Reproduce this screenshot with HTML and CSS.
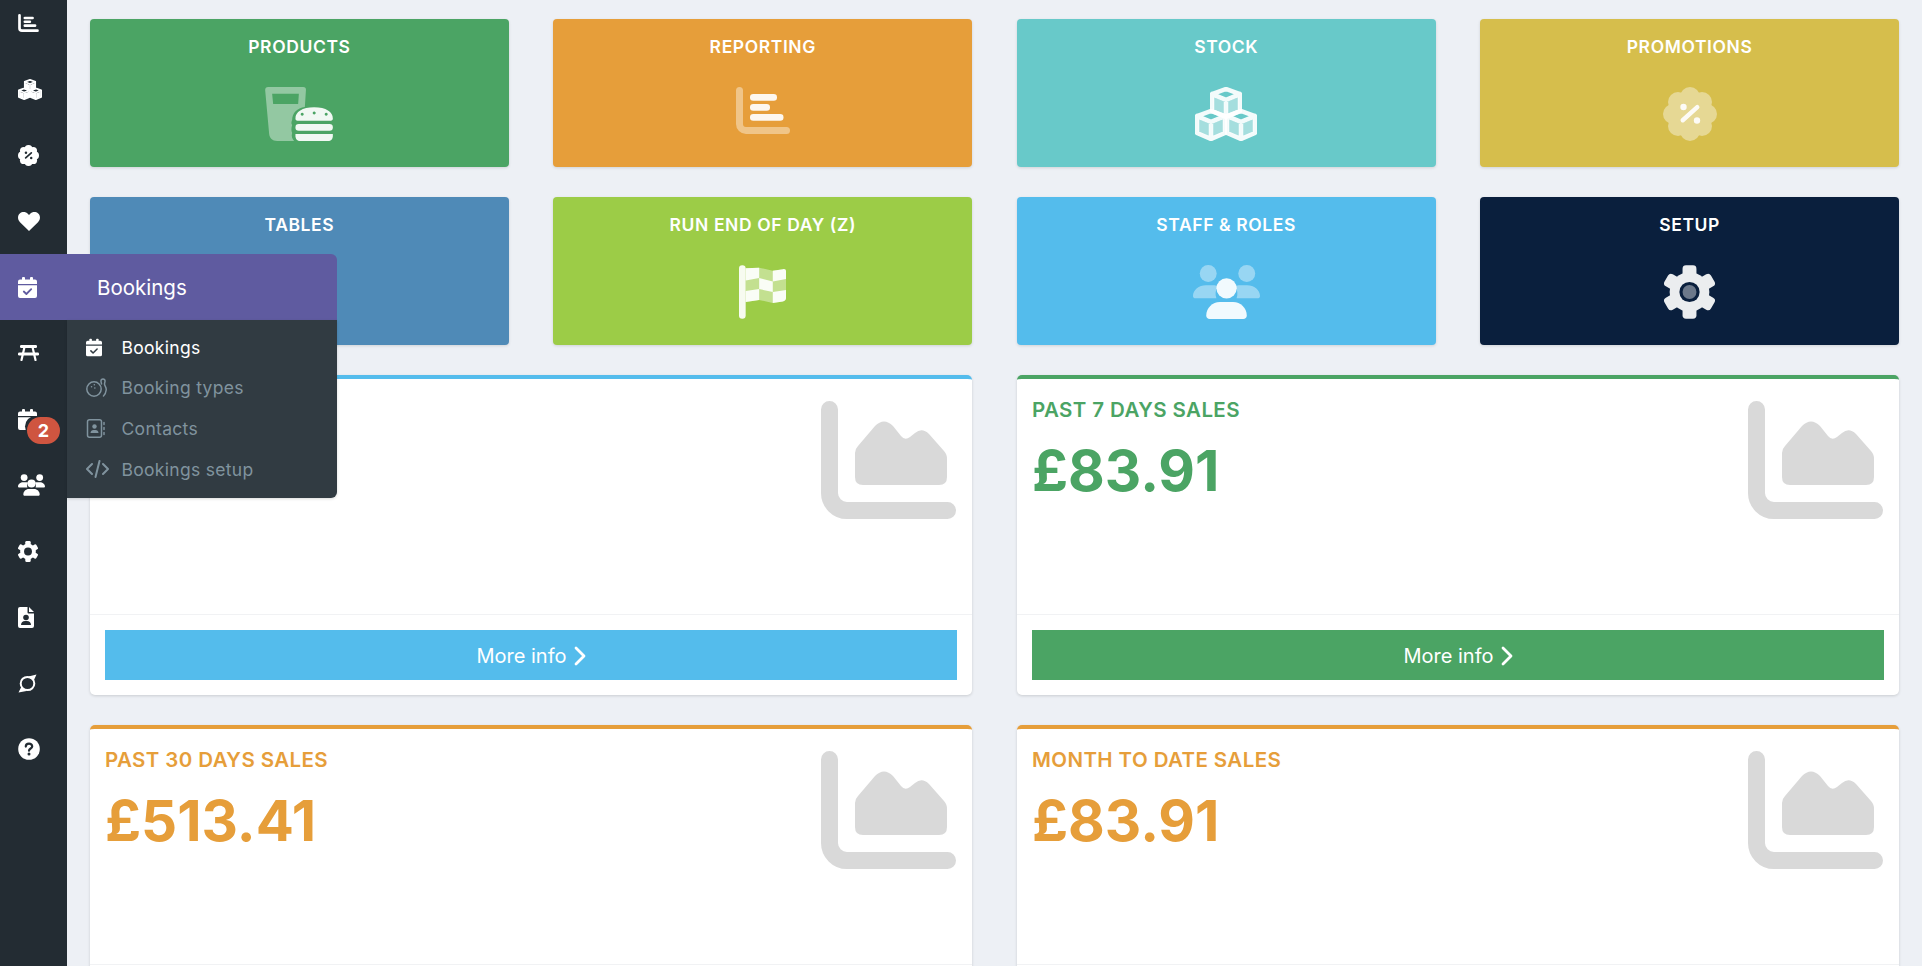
FILE: index.html
```html
<!DOCTYPE html>
<html lang="en">
<head>
    <meta charset="UTF-8">
    <meta name="viewport" content="width=device-width, initial-scale=1.0">
    <title>Dashboard</title>
    <link rel="stylesheet" href="styles.css">
</head>
<body>
    <svg class="sprite" aria-hidden="true">
        <symbol id="i-chart" viewBox="0 0 54 47">
            <path class="sec line" stroke-width="7" d="M3.5 3.5V37a6.5 6.5 0 0 0 6.5 6.5H50.5"/>
            <rect class="pri" x="14" y="7" width="27" height="6.7" rx="3.3"/>
            <rect class="pri" x="14" y="17" width="20" height="6.7" rx="3.3"/>
            <rect class="pri" x="14" y="27" width="33.5" height="6.7" rx="3.3"/>
        </symbol>
        <symbol id="cube" viewBox="0 0 32 32">
            <path class="sec" d="M3 10l11.5 4.6V28L3 23.5zM29 10l-11.5 4.6V28L29 23.5z"/>
            <path class="pri line" stroke-width="4.500" d="M16 2l14 5.2V24l-14 6-14-6V7.2zM2 7.2l14 5.6 14-5.6M16 12.8V30"/>
        </symbol>
        <symbol id="i-cubes" viewBox="0 0 62 54">
            <use href="#cube" x="15" y="0" width="32" height="32"/>
            <use href="#cube" x="0" y="22" width="32" height="32"/>
            <use href="#cube" x="30" y="22" width="32" height="32"/>
        </symbol>
        <symbol id="i-percent" viewBox="0 0 54 54">
            <g class="sec">
                <circle cx="27" cy="27" r="19"/>
                <circle cx="27" cy="10" r="10"/><circle cx="39" cy="15" r="10"/><circle cx="44" cy="27" r="10"/><circle cx="39" cy="39" r="10"/>
                <circle cx="27" cy="44" r="10"/><circle cx="15" cy="39" r="10"/><circle cx="10" cy="27" r="10"/><circle cx="15" cy="15" r="10"/>
            </g>
            <g class="pct">
                <circle cx="20.5" cy="20" r="3.2"/><circle cx="34" cy="33.5" r="3.2"/>
                <rect x="15" y="24.5" width="24" height="4.4" rx="2.2" transform="rotate(-42 27 26.7)"/>
            </g>
        </symbol>
        <symbol id="i-heart" viewBox="0 0 22 19">
            <path class="pri" d="M11 19L2 10.2C-.6 7.600-.6 3.600 1.800 1.500 4.200-.6 7.800-.3 10 1.900l1 1 1-1c2.200-2.200 5.800-2.500 8.200-.4 2.400 2.100 2.400 6.100-.2 8.700z"/>
        </symbol>
        <symbol id="i-calendar" viewBox="0 0 19 21">
            <rect class="pri" x="4" y="0" width="3" height="5" rx="1"/>
            <rect class="pri" x="12" y="0" width="3" height="5" rx="1"/>
            <path class="pri" d="M2 2.500H17a2 2 0 0 1 2 2V7H0V4.500a2 2 0 0 1 2-2zM0 8.300H19V19a2 2 0 0 1-2 2H2a2 2 0 0 1-2-2z"/>
            <path class="cut-line" stroke-width="1.800" d="M5.800 14.500l2.600 2.500 4.800-4.800"/>
        </symbol>
        <symbol id="i-table" viewBox="0 0 21 16">
            <rect class="pri" x="2" y="0" width="17" height="3" rx="1.200"/>
            <rect class="pri" x="0" y="7.500" width="21" height="3" rx="1.200"/>
            <path class="pri line" stroke-width="2.200" d="M6.500 2L3.500 15M14.500 2l3 13"/>
        </symbol>
        <symbol id="i-calclock" viewBox="0 0 19 21">
            <rect class="pri" x="4" y="0" width="3" height="5" rx="1"/>
            <rect class="pri" x="12" y="0" width="3" height="5" rx="1"/>
            <path class="pri" d="M2 2.500H17a2 2 0 0 1 2 2V7H0V4.500a2 2 0 0 1 2-2zM0 8.300H19V19a2 2 0 0 1-2 2H2a2 2 0 0 1-2-2z"/>
        </symbol>
        <symbol id="i-users" viewBox="0 0 67.300 54">
            <g class="sec">
                <circle cx="15.300" cy="8.500" r="8.500"/>
                <circle cx="54" cy="8.500" r="8.500"/>
                <path d="M0 31C0 25 6 20.300 13 20.300H20C22 20.300 23.500 20.700 25 21.500 22.500 25 22 29.500 23.500 33.300H2.500C1 33.300 0 32.500 0 31z"/>
                <path d="M67.300 31C67.300 25 61.300 20.300 54.300 20.300H47.300C45.300 20.300 43.800 20.700 42.300 21.500 44.800 25 45.300 29.500 43.800 33.300H64.800C66.300 33.300 67.300 32.500 67.300 31z"/>
            </g>
            <circle class="pri" cx="33.700" cy="23.300" r="10.200"/>
            <path class="pri" d="M13.300 50.500C13.300 43 19.500 37 27 37H40.300C47.800 37 54 43 54 50.500 54 52.500 52.500 54 50.500 54H16.800C14.800 54 13.300 52.500 13.300 50.500z"/>
        </symbol>
        <symbol id="i-gear" viewBox="0 0 51.400 54">
            <g class="pri" transform="translate(25.700 27)">
                <circle r="20"/>
                <rect x="-7" y="-27" width="14" height="14" rx="3.500"/>
                <rect x="-7" y="-27" width="14" height="14" rx="3.500" transform="rotate(60)"/>
                <rect x="-7" y="-27" width="14" height="14" rx="3.500" transform="rotate(120)"/>
                <rect x="-7" y="-27" width="14" height="14" rx="3.500" transform="rotate(180)"/>
                <rect x="-7" y="-27" width="14" height="14" rx="3.500" transform="rotate(240)"/>
                <rect x="-7" y="-27" width="14" height="14" rx="3.500" transform="rotate(300)"/>
            </g>
            <circle class="cut" cx="25.700" cy="27" r="10.200"/>
            <circle class="hub" cx="25.700" cy="27" r="7"/>
        </symbol>
        <symbol id="i-fileuser" viewBox="0 0 16 21">
            <path class="pri" d="M2 0H9.500V5.500a1 1 0 0 0 1 1H16V19a2 2 0 0 1-2 2H2a2 2 0 0 1-2-2V2a2 2 0 0 1 2-2zM11 0l5 5H11z"/>
            <circle class="cut" cx="8" cy="10.500" r="2.800"/>
            <path class="cut" d="M3 18c0-2.500 1.800-4 4-4h2c2.200 0 4 1.500 4 4z"/>
        </symbol>
        <symbol id="i-orbit" viewBox="0 0 19 19">
            <ellipse class="line pri" stroke-width="2" cx="9.500" cy="9.500" rx="6.800" ry="6.600"/>
            <path class="pri" d="M18.500 .5L10.500 2.500 15.500 7zM.5 18.500L8.500 17 3.500 12.500z"/>
        </symbol>
        <symbol id="i-help" viewBox="0 0 22 22">
            <circle class="pri" cx="11" cy="11" r="10.800"/>
            <path class="cut-line" stroke-width="2.200" d="M7.800 8.600C7.800 6.800 9.200 5.700 11 5.700S14.200 6.800 14.200 8.500C14.200 10.600 11 10.500 11 12.700"/>
            <circle class="cut" cx="11" cy="16" r="1.500"/>
        </symbol>
        <symbol id="i-burger" viewBox="0 0 67.700 54">
            <path class="sec" fill-rule="evenodd" d="M3 0H38C40 0 41 1 40.800 3L39.700 20C32 21 27 26 27 33 26 35 26 37 27 38 26 41 26 44 27 46 26 49 27 52 29 54H12C7 54 4.500 51 4 47L0 3C0 1 1 0 3 0zM7 6.700L8 17H33L33.700 6.700z"/>
            <path class="pri" fill-rule="evenodd" d="M30.300 31.500C30.300 25 37 20.300 49 20.300S67.700 25 67.700 31.500C67.700 32.800 67 33.700 65.700 33.700H32.300C31 33.700 30.300 32.800 30.300 31.500zM37 25.700a1.500 1.500 0 1 0 .1 0zM49 24.500a1.500 1.500 0 1 0 .1 0zM61 25.700a1.500 1.500 0 1 0 .1 0z"/>
            <rect class="pri" x="30.300" y="37" width="37.400" height="6.700" rx="3.300"/>
            <path class="pri" d="M30.300 47H67.700V49C67.700 52 65.700 54 63 54H35C32.300 54 30.300 52 30.300 49z"/>
        </symbol>
        <symbol id="i-flag" viewBox="0 0 47.300 54">
            <rect class="pri" x="0" y="0" width="6.700" height="54" rx="3.300"/>
            <path class="sec" d="M6.700 3L20 2.500 34 5.500 44.500 4C46 3.800 47.300 4.500 47.300 6V33C47.300 35 46 36 44 36.500L34 38 20 35 6.700 37z"/>
            <path class="pri" d="M6.700 3L20.300 2.500V13L6.700 15.500zM20.300 13L34 16.500V27L20.300 24zM6.700 26L20.300 24V35L6.700 37zM34 5.500L44.500 4C46 3.800 47.300 4.500 47.300 6V14L34 16.500zM34 27L47.300 25V33C47.300 35 46 36 44 36.500L34 38z"/>
        </symbol>
        <symbol id="i-area" viewBox="0 0 135 118">
            <path class="area-axis" d="M8.500 8.500V92a17.500 17.500 0 0 0 17.500 17.500H126.500"/>
            <path class="area-fill" d="M34 52Q34 48 37 45L54 25Q63 16 72 25L80 35Q84 40 89 36L94 32Q101 26 108 33L123 50Q126 53 126 58V76Q126 84 118 84H42Q34 84 34 76Z"/>
        </symbol>
    </svg>

    <nav class="sidebar">
        <div class="side-item"><svg width="21" height="18"><use href="#i-chart"/></svg></div>
        <div class="side-item"><svg width="24" height="21"><use href="#i-cubes"/></svg></div>
        <div class="side-item"><svg class="side-percent" width="21" height="21"><use href="#i-percent"/></svg></div>
        <div class="side-item"><svg width="22" height="19"><use href="#i-heart"/></svg></div>
        <div class="side-item side-active">
            <div class="flyout">
                <div class="fly-head">
                    <svg width="19" height="21"><use href="#i-calendar"/></svg>
                    <span>Bookings</span>
                </div>
                <ul class="fly-menu">
                    <li class="current">
                        <span class="fly-icon"><svg width="16" height="19"><use href="#i-calendar"/></svg></span>
                        Bookings
                    </li>
                    <li>
                        <span class="fly-icon">
                            <svg class="outline" width="21" height="19" viewBox="0 0 21 19">
                                <circle cx="8" cy="11" r="7.200"/>
                                <path d="M17 1c1.500 0 2.200 1.200 2 2.500-.2 1.500-.8 2-.3 3.500.5 1.500 1.800 2.500 1.500 5-.3 2.500-1 4.500-2.700 6M17 1c-1.500 0-2.200 1.200-2 2.500.1 1 .5 1.600.5 2.500"/>
                                <path d="M5.500 8.800h.1M8.300 6.800h.1M8.800 10h.1"/>
                            </svg>
                        </span>
                        Booking types
                    </li>
                    <li>
                        <span class="fly-icon">
                            <svg class="outline" width="19" height="19" viewBox="0 0 19 19">
                                <rect x="1.500" y=".8" width="14" height="17.400" rx="2"/>
                                <circle class="solid" cx="8.500" cy="7.500" r="2.200"/>
                                <path class="solid" d="M4.500 14c0-2 1.500-3 3-3h2c1.500 0 3 1 3 3z"/>
                                <path d="M18 3.500v2M18 8.500v2M18 13.500v2"/>
                            </svg>
                        </span>
                        Contacts
                    </li>
                    <li>
                        <span class="fly-icon">
                            <svg class="outline" width="23" height="18" viewBox="0 0 23 18">
                                <path stroke-width="2" d="M6 4L1 9l5 5M17 4l5 5-5 5M13.500 1L9.500 17"/>
                            </svg>
                        </span>
                        Bookings setup
                    </li>
                </ul>
            </div>
        </div>
        <div class="side-item"><svg width="21" height="16"><use href="#i-table"/></svg></div>
        <div class="side-item">
            <svg width="19" height="21"><use href="#i-calclock"/></svg>
            <span class="side-badge">2</span>
        </div>
        <div class="side-item"><svg width="27" height="22"><use href="#i-users"/></svg></div>
        <div class="side-item"><svg class="side-gear" width="20" height="21"><use href="#i-gear"/></svg></div>
        <div class="side-item"><svg width="16" height="21"><use href="#i-fileuser"/></svg></div>
        <div class="side-item"><svg width="19" height="19"><use href="#i-orbit"/></svg></div>
        <div class="side-item"><svg width="22" height="22"><use href="#i-help"/></svg></div>
    </nav>

    <main class="content">
        <section class="tiles">
            <a class="tile tile-green"><h3>PRODUCTS</h3><svg width="68" height="54"><use href="#i-burger"/></svg></a>
            <a class="tile tile-orange"><h3>REPORTING</h3><svg width="54" height="47" class="tile-chart"><use href="#i-chart"/></svg></a>
            <a class="tile tile-teal"><h3>STOCK</h3><svg width="62" height="54"><use href="#i-cubes"/></svg></a>
            <a class="tile tile-yellow"><h3>PROMOTIONS</h3><svg width="54" height="54"><use href="#i-percent"/></svg></a>
            <a class="tile tile-steel"><h3>TABLES</h3><svg width="62" height="47"><use href="#i-table"/></svg></a>
            <a class="tile tile-lime"><h3>RUN END OF DAY (Z)</h3><svg width="47" height="54"><use href="#i-flag"/></svg></a>
            <a class="tile tile-sky"><h3>STAFF &amp; ROLES</h3><svg width="67" height="54"><use href="#i-users"/></svg></a>
            <a class="tile tile-navy"><h3>SETUP</h3><svg width="51" height="54"><use href="#i-gear"/></svg></a>
        </section>

        <section class="cards">
            <div class="card card-sky">
                <div class="card-body">
                    <svg class="card-chart" width="135" height="118"><use href="#i-area"/></svg>
                </div>
                <div class="card-foot"><a class="more-btn">More info <svg class="chev" width="12" height="20" viewBox="0 0 12 20"><path d="M2 2l8 8-8 8"/></svg></a></div>
            </div>
            <div class="card card-green">
                <div class="card-body">
                    <h4>PAST 7 DAYS SALES</h4>
                    <div class="amount">£83.91</div>
                    <svg class="card-chart" width="135" height="118"><use href="#i-area"/></svg>
                </div>
                <div class="card-foot"><a class="more-btn">More info <svg class="chev" width="12" height="20" viewBox="0 0 12 20"><path d="M2 2l8 8-8 8"/></svg></a></div>
            </div>
            <div class="card card-orange">
                <div class="card-body">
                    <h4>PAST 30 DAYS SALES</h4>
                    <div class="amount">£513.41</div>
                    <svg class="card-chart" width="135" height="118"><use href="#i-area"/></svg>
                </div>
                <div class="card-foot"></div>
            </div>
            <div class="card card-orange">
                <div class="card-body">
                    <h4>MONTH TO DATE SALES</h4>
                    <div class="amount">£83.91</div>
                    <svg class="card-chart" width="135" height="118"><use href="#i-area"/></svg>
                </div>
                <div class="card-foot"></div>
            </div>
        </section>
    </main>
</body>
</html>
```

FILE: styles.css
```css
html, body {
    height: 100%;
}
body {
    margin: 0;
    display: flex;
    overflow: hidden;
    background-color: #edf0f5;
    font-family: 'Inter', 'Liberation Sans', sans-serif;
    color: #fff;
}
h3, h4, ul {
    margin: 0;
    padding: 0;
}
.sprite {
    position: absolute;
    width: 0;
    height: 0;
}

/* icon layers, coloured by custom properties */
.pri { fill: #fff; opacity: var(--pri, 1); }
.sec { fill: #fff; opacity: var(--sec, 1); }
.pct { fill: var(--pct, #fff); opacity: var(--pri, 1); }
.cut { fill: var(--cut, #232c33); }
.hub { fill: #fff; opacity: var(--hub, 0); }
.line { fill: none; stroke: #fff; stroke-linecap: round; stroke-linejoin: round; }
.cut-line { fill: none; stroke: var(--cut, #232c33); stroke-linecap: round; stroke-linejoin: round; }
.area-axis { fill: none; stroke: #d9d9d9; stroke-width: 17; stroke-linecap: round; }
.area-fill { fill: #d9d9d9; }

/* sidebar */
.sidebar {
    flex: 0 0 67px;
    width: 67px;
    height: 976px;
    margin-top: -10px;
    background-color: #232c33;
    position: relative;
    z-index: 5;
    --pct: #232c33;
}
.side-item {
    height: 66px;
    padding-left: 18px;
    display: flex;
    align-items: center;
    position: relative;
}
.side-badge {
    position: absolute;
    left: 27px;
    top: 31px;
    width: 33px;
    height: 27px;
    border-radius: 14px;
    background-color: #cf5540;
    box-shadow: -5px -4px 0 -3px #232c33;
    font-size: 18px;
    font-weight: 700;
    line-height: 27px;
    text-align: center;
}
.flyout {
    position: absolute;
    left: 0;
    top: 0;
    width: 337px;
}
.fly-head {
    height: 66px;
    padding-left: 18px;
    display: flex;
    align-items: center;
    background-color: #5f5ba0;
    border-radius: 0 6px 0 0;
    font-size: 20.5px;
    line-height: 26px;
    --cut: #5f5ba0;
}
.fly-head span {
    margin: 1px 0 0 60px;
}
.fly-menu {
    list-style: none;
    margin-left: 67px;
    padding: 7px 0 9px;
    background-color: #313b42;
    border-radius: 0 0 6px 0;
    box-shadow: 0 1px 3px rgba(0,0,0,0.15);
}
.fly-menu li {
    height: 40.6px;
    display: flex;
    align-items: center;
    font-size: 17.5px;
    letter-spacing: 0.3px;
    color: #80939e;
}
.fly-menu li.current {
    color: #fff;
    --cut: #313b42;
}
.fly-icon {
    width: 54.5px;
    padding-left: 19px;
    box-sizing: border-box;
    display: flex;
    align-items: center;
}
.outline {
    fill: none;
    stroke: #80939e;
    stroke-width: 1.5;
    stroke-linecap: round;
    stroke-linejoin: round;
}
.outline .solid {
    fill: #80939e;
    stroke: none;
}

/* main area */
.content {
    flex: 1;
    padding: 19px 23px 0;
    box-sizing: border-box;
    min-width: 0;
}
.tiles {
    display: grid;
    grid-template-columns: repeat(4, 1fr);
    column-gap: 44.6px;
    row-gap: 30px;
}
.tile {
    height: 148px;
    box-sizing: border-box;
    padding-top: 17px;
    border-radius: 4px;
    box-shadow: 0 1px 3px rgba(0,0,0,0.12);
    display: flex;
    flex-direction: column;
    align-items: center;
    --sec: 0.4;
    --pri: 0.92;
}
.tile h3 {
    height: 22px;
    margin-bottom: 29px;
    font-size: 17.5px;
    font-weight: 600;
    line-height: 22px;
    letter-spacing: 0.6px;
}
.tile-green { background-color: #4ba464; }
.tile-orange { background-color: #e69e3a; }
.tile-teal { background-color: #68c9c9; }
.tile-yellow { background-color: #d6be4c; }
.tile-steel { background-color: #4f8ab7; }
.tile-lime { background-color: #9ccc47; }
.tile-sky { background-color: #54bcec; }
.tile-navy { background-color: #0a1f3d; --cut: #0a1f3d; --hub: 0.4; }

.cards {
    margin-top: 30px;
    display: grid;
    grid-template-columns: 1fr 1fr;
    column-gap: 45px;
    row-gap: 30px;
}
.card {
    height: 320px;
    box-sizing: border-box;
    background: white;
    border-top: 4px solid;
    border-radius: 5px;
    box-shadow: 0 1px 3px rgba(0,0,0,0.15);
    display: flex;
    flex-direction: column;
    color: var(--tone);
    border-color: var(--tone);
}
.card-sky { --tone: #54bcec; }
.card-green { --tone: #4ba464; }
.card-orange { --tone: #e69e3a; }
.card-body {
    flex: 1;
    position: relative;
    padding: 20px 15px 0;
}
.card-body h4 {
    font-size: 20.5px;
    font-weight: 600;
    line-height: 22px;
    letter-spacing: 0.4px;
}
.amount {
    margin-top: 16px;
    font-size: 56.5px;
    font-weight: 700;
    line-height: 68px;
}
.card-chart {
    position: absolute;
    right: 16px;
    top: 22px;
}
.card-foot {
    height: 81px;
    box-sizing: border-box;
    padding: 15px;
    border-top: 1px solid #f1f2f4;
}
.more-btn {
    height: 50px;
    padding-top: 1px;
    box-sizing: border-box;
    display: flex;
    align-items: center;
    justify-content: center;
    gap: 7px;
    background-color: var(--tone);
    color: #fff;
    font-size: 20px;
}
.chev {
    fill: none;
    stroke: #fff;
    stroke-width: 2.8;
    stroke-linecap: round;
    stroke-linejoin: round;
}
```
